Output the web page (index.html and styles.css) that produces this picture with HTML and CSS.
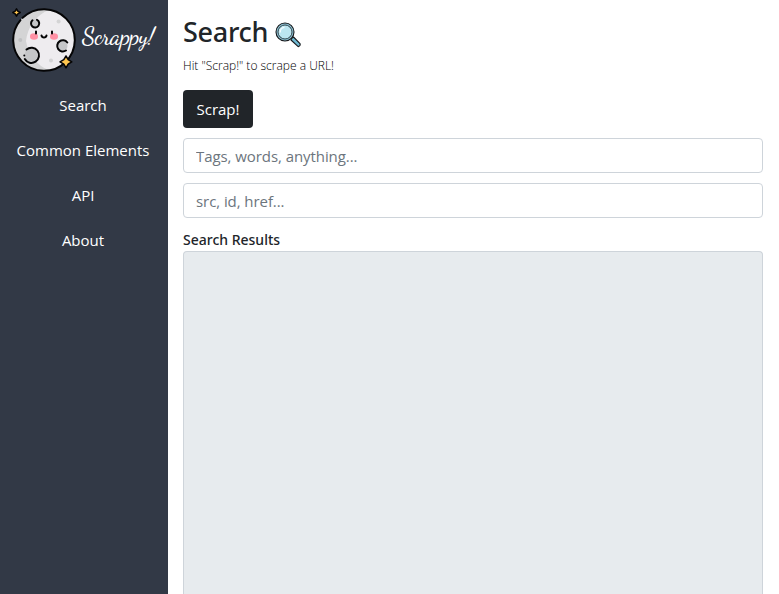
FILE: index.html
```html
<!DOCTYPE html>
<html lang="en">
<head>
<meta charset="utf-8">
<title>Scrappy!</title>
<link rel="stylesheet" href="styles.css">
</head>
<body>
<aside class="sidebar">
  <a class="brand" href="#">
    <svg class="moon" viewBox="0 0 64 64" aria-hidden="true">
      <circle cx="32" cy="32" r="30.8" fill="#eeecef"/>
      <path d="M32 1.2a30.8 30.8 0 0 0 0 61.6q3 0 5-.5A38 38 0 0 1 14 33 38 38 0 0 1 37 1.700z" fill="#d4d4d5"/>
      <circle cx="46.600" cy="13.500" r="2" fill="#d4d4d5"/><circle cx="8.300" cy="32" r="2" fill="#bfc0c2"/><circle cx="39" cy="52.500" r="2" fill="#d4d4d5"/>
      <g fill="#c5c6c8"><circle cx="23" cy="15.500" r="4"/><circle cx="20" cy="47" r="7.500"/><circle cx="50" cy="38" r="5.500"/></g>
      <ellipse cx="22" cy="28.500" rx="4" ry="3.200" fill="#ff91a5"/><ellipse cx="42" cy="28.500" rx="4" ry="3.200" fill="#ff91a5"/>
      <g fill="none" stroke="#050506" stroke-width="2" stroke-linecap="round">
        <circle cx="32" cy="32" r="30.8" stroke-dasharray="190 3.520" transform="rotate(226 32 32)"/>
        <path d="M24 23.500v2M40 23.500v2M29.500 27.500c.6 2.600 4.400 2.600 5 0M20.500 12.300a4.100 4.100 0 1 0 4.500-.5M14.500 41.500a7.600 7.600 0 1 1-1.700 9.500M55.300 34.500a5.600 5.600 0 1 0-1.300 8"/>
      </g>
      <circle cx="12.300" cy="47.500" r="1" fill="#050506"/>
      <g fill="#ffc64f" stroke="#050506" stroke-linejoin="round">
        <path stroke-width="1.500" d="M4.500.9 5.800 3.200 8.200 4.500 5.800 5.800 4.500 8.200 3.200 5.800.8 4.500 3.200 3.200z"/>
        <path stroke-width="1.500" d="M54 48 56.200 51.700 59.800 53.900 56.200 56.100 54 59.800 51.800 56.100 48 53.900 51.800 51.700z"/>
      </g>
    </svg>
    <span class="brand-name">Scrappy!</span>
  </a>
  <nav class="nav">
    <a href="#">Search</a>
    <a href="#">Common Elements</a>
    <a href="#">API</a>
    <a href="#">About</a>
  </nav>
</aside>
<main class="content">
  <h1 class="title"><span>Search</span>
    <svg class="lens" viewBox="0 0 26 26" aria-hidden="true">
      <path d="m16.500 16.500 2-1.500 6.500 6.600q.8 2.200-1.800 3L16 18z" fill="#6fb9d2" stroke="#16191c" stroke-width="1.100" stroke-linejoin="round"/>
      <circle cx="10" cy="10" r="9" fill="#8fc3d5" stroke="#16191c" stroke-width="1.100"/>
      <circle cx="10" cy="10" r="7" fill="#bce6f1" stroke="#24343b" stroke-width=".9"/>
      <path d="M5.200 10.500A4.900 4.900 0 0 1 9.500 5.200" fill="none" stroke="#f4fcff" stroke-width="1.500"/>
    </svg>
  </h1>
  <p class="hint">Hit "Scrap!" to scrape a URL!</p>
  <button class="button" type="button">Scrap!</button>
  <input class="field" type="text" placeholder="Tags, words, anything..." aria-label="Tags">
  <input class="field" type="text" placeholder="src, id, href..." aria-label="Attributes">
  <h2 class="label">Search Results</h2>
  <div class="results"></div>
</main>
</body>
</html>
```
FILE: styles.css
```css
* { box-sizing: border-box; }
body {
  margin: 0;
  display: flex;
  height: 594px;
  background: #fff;
  color: #212529;
  font: 15px/24px "Open Sans", "Noto Sans", sans-serif;
}
.sidebar { width: 168px; flex: none; background: #323946; }
.brand {
  display: flex;
  height: 83px;
  padding: 8px 0 0 12px;
  color: #fff;
  text-decoration: none;
}
.moon { width: 64px; height: 64px; flex: none; }
.brand-name {
  margin: 14px 0 0 6px;
  font: 500 24px/30px "Dancing Script", "Segoe Script", cursive;
  letter-spacing: -.35px;
  white-space: nowrap;
}
.nav { display: flex; flex-direction: column; }
.nav a {
  height: 45px;
  padding: 10px 2px 0 0;
  color: #fff;
  text-align: center;
  text-decoration: none;
  white-space: nowrap;
}
.content {
  flex: 1;
  min-width: 0;
  display: flex;
  flex-direction: column;
  padding: 15px 16px 0 15px;
}
.title {
  display: flex;
  flex: none;
  gap: 7px;
  height: 40px;
  margin: 0;
  font: 500 27px/34px "Noto Sans", "Open Sans", sans-serif;
  letter-spacing: -.3px;
}
.lens { width: 26px; height: 26px; margin-top: 7px; }
.hint {
  height: 35px;
  flex: none;
  margin: 0;
  font-size: 12px;
  line-height: 21px;
  font-weight: 300;
  color: #000;
}
.button {
  width: 70px;
  height: 38px;
  flex: none;
  margin-bottom: 10px;
  padding: 0;
  border: 0;
  border-radius: 4px;
  background: #212529;
  color: #fff;
  font: inherit;
}
.field {
  height: 35px;
  flex: none;
  margin-bottom: 10px;
  padding: 1px 12px 0;
  border: 1px solid #ced4da;
  border-radius: 4px;
  background: #fff;
  font: inherit;
  letter-spacing: -.07px;
}
.field::placeholder { color: #6c757d; opacity: 1; }
.label {
  height: 23px;
  flex: none;
  margin: 0;
  font: 500 14px/23px "Noto Sans", "Open Sans", sans-serif;
}
.results {
  flex: 1;
  border: 1px solid #ced4da;
  border-bottom: 0;
  border-radius: 4px 4px 0 0;
  background: #e7ebee;
}
```
